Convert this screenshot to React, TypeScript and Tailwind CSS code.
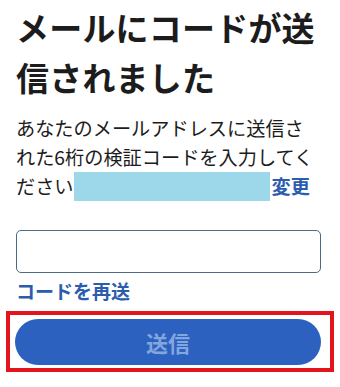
import React from 'react';

export default function App() {
  return (
    <div className="w-[340px] h-[387px] bg-white overflow-hidden font-['Noto_Sans_CJK_JP','Noto_Sans',sans-serif] text-[#1c1c1c]">
      <div className="px-4">
        <h1 className="mt-[2px] text-[33px] leading-[50px] font-bold tracking-[0.2px]">メールにコードが送信されました</h1>

        <p className="mt-[12px] w-[302px] text-[19.2px] leading-[29px]">
          あなたのメールアドレスに送信された6桁の検証コードを入力してください
          <span className="inline-block align-top w-[196px] h-[29px] bg-[#9cd8e9]" />
          <a className="ml-[2px] font-bold text-[#2b5cad]">変更</a>
        </p>

        <input
          className="mt-[29px] block w-[305px] h-[43px] rounded-[5px] border border-[#4d6a86] px-3 text-[18px] outline-none"
          type="text"
        />

        <a className="mt-[3px] block text-[19px] leading-[29px] font-bold text-[#2b5cad]">コードを再送</a>
      </div>

      <div className="relative mt-[14px] px-[15px]">
        <div className="absolute left-[6px] right-[6px] top-[-8px] bottom-[-7px] border-[4px] border-[#e3141c]" />
        <button className="relative block w-[306px] h-[46px] rounded-full bg-[#2c61bf] text-[22px] font-bold text-[#82a6dd]">
          送信
        </button>
      </div>
    </div>
  );
}
